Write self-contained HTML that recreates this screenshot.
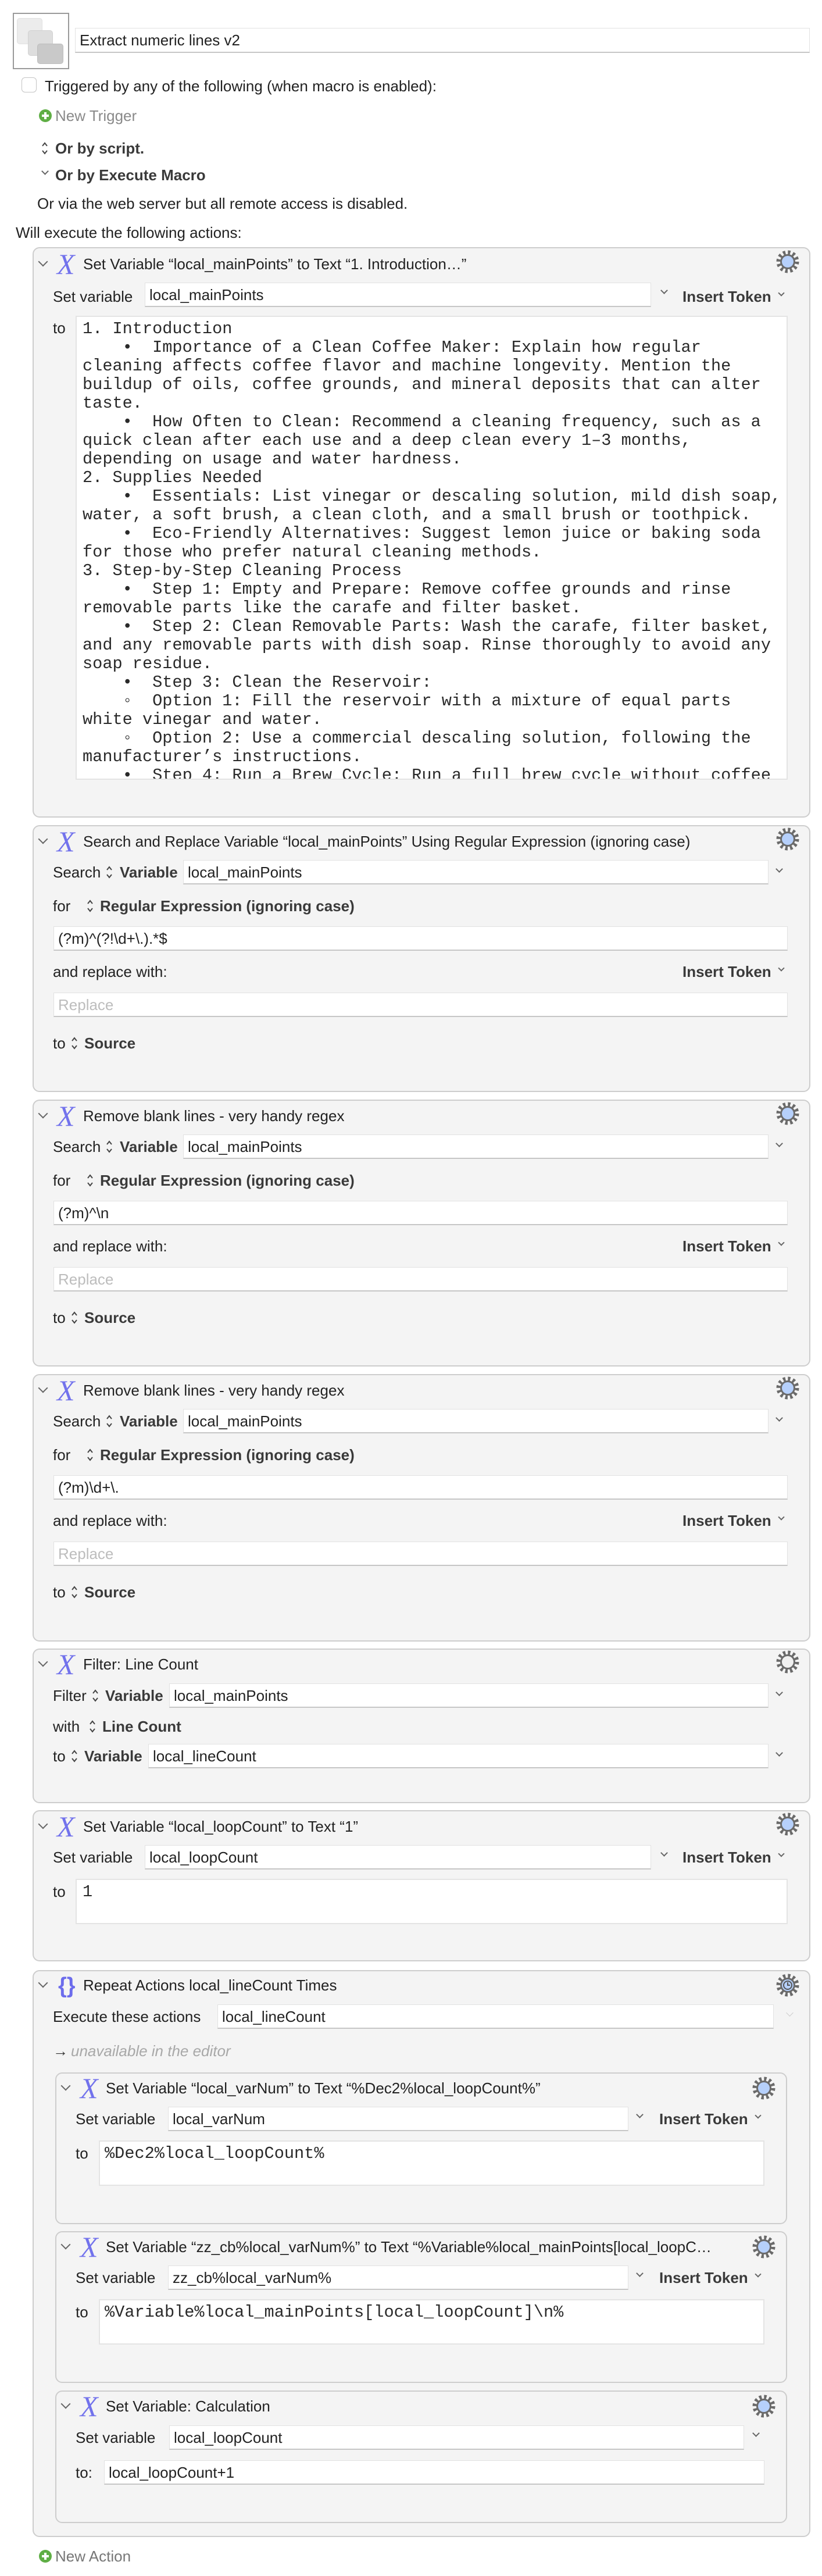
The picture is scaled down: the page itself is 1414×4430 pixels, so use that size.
<!DOCTYPE html>
<html><head><meta charset="utf-8"><style>
*{margin:0;padding:0;box-sizing:border-box}
body{width:1414px;height:4430px;background:#fff;position:relative;overflow:hidden;font-family:"Liberation Sans",Arial,sans-serif;font-size:26px;color:#222}
.t{position:absolute;line-height:30px;height:30px;white-space:nowrap}
.b{font-weight:bold;color:#3a3a3a}
.box{position:absolute;background:#f4f4f4;border:2px solid #cdcdcd;border-radius:12px}
.f{position:absolute;background:#fff;border:1px solid #e2e2e2;border-bottom:2px solid #c6c6c6;padding-left:7px;white-space:nowrap;overflow:hidden;color:#222}
.ph{color:#bdbdbd}
.mono{font-family:"Liberation Mono",monospace;font-size:28.6px;line-height:32px;white-space:pre;color:#2a2a2a}
.ta{position:absolute;background:#fff;border:2px solid #e4e4e4;overflow:hidden}
.x{position:absolute;font-family:"Liberation Serif",serif;font-style:italic;font-size:50px;line-height:40px;color:#7272ec;width:40px;height:40px}
.chev{position:absolute;width:12px;height:12px;border-right:2.5px solid #666;border-bottom:2.5px solid #666;transform:rotate(45deg)}
.ud{position:absolute;width:12px;height:26px}
</style></head><body>

<!-- top -->
<div style="position:absolute;left:22px;top:22px;width:97px;height:97px;border:2px solid #9a9a9a;background:#fff"></div>
<div style="position:absolute;left:29px;top:31px;width:44px;height:45px;background:#ececec;border-radius:5px;border:1px solid #e0e0e0"></div>
<div style="position:absolute;left:48px;top:52px;width:43px;height:44px;background:#dedede;border-radius:5px;border:1px solid #d2d2d2"></div>
<div style="position:absolute;left:64px;top:75px;width:45px;height:35px;background:#c9c9c9;border-radius:5px;border:1px solid #bdbdbd"></div>
<div class="f" style="left:129px;top:48px;width:1264px;height:43px;line-height:40px;font-size:26px">Extract numeric lines v2</div>
<div style="position:absolute;left:37px;top:133px;width:26px;height:26px;border:1.5px solid #c4c4c4;border-radius:6px;background:#fff"></div>
<div class="t" style="left:77px;top:133px">Triggered by any of the following (when macro is enabled):</div>
<svg style="position:absolute;left:66px;top:187px" width="24" height="24"><circle cx="12" cy="12" r="11" fill="#5fae45"/><path d="M12 6v12M6 12h12" stroke="#fff" stroke-width="4"/></svg>
<div class="t" style="left:95px;top:184px;color:#8a8a8a">New Trigger</div>
<svg class="ud" style="left:71px;top:242px" viewBox="0 0 12 26"><path d="M2 9l4-5 4 5M2 17l4 5 4-5" fill="none" stroke="#444" stroke-width="2"/></svg>
<div class="t b" style="left:95px;top:240px">Or by script.</div>
<div class="chev" style="left:73px;top:290px;width:9px;height:9px;border-width:2px"></div>
<div class="t b" style="left:95px;top:286px">Or by Execute Macro</div>
<div class="t" style="left:64px;top:335px">Or via the web server but all remote access is disabled.</div>
<div class="t" style="left:27px;top:385px">Will execute the following actions:</div>

<!-- gear def -->
<svg width="0" height="0" style="position:absolute"><defs>
<g id="gear"><circle cx="20" cy="20" r="16" fill="none" stroke="#6a6a6a" stroke-width="7" stroke-dasharray="4.2 4.2"/><circle cx="20" cy="20" r="13" fill="#6a6a6a"/><circle cx="20" cy="20" r="10" fill="#b6d0fb"/></g>
</defs></svg>

<!-- Box 1 -->
<div class="box" style="left:56px;top:425px;width:1338px;height:981px"></div>
<div class="chev" style="left:68px;top:444px"></div>
<div class="x" style="left:98px;top:434px">X</div>
<div class="t" style="left:143px;top:439px">Set Variable “local_mainPoints” to Text “1. Introduction…”</div>
<svg style="position:absolute;left:1335px;top:430px" width="40" height="40"><use href="#gear"/></svg>
<div class="t" style="left:91px;top:495px">Set variable</div>
<div class="f" style="left:249px;top:486px;width:871px;height:42px;line-height:40px">local_mainPoints</div>
<div class="chev" style="left:1138px;top:495px;width:9px;height:9px;border-width:2px"></div>
<div class="t b" style="left:1174px;top:495px">Insert Token</div>
<div class="chev" style="left:1340px;top:500px;width:8px;height:8px;border-width:2px"></div>
<div class="t" style="left:91px;top:549px">to</div>
<div class="ta" style="left:130px;top:543px;width:1225px;height:798px"><div class="mono" style="position:absolute;left:10px;top:5px">1. Introduction
    •  Importance of a Clean Coffee Maker: Explain how regular
cleaning affects coffee flavor and machine longevity. Mention the
buildup of oils, coffee grounds, and mineral deposits that can alter
taste.
    •  How Often to Clean: Recommend a cleaning frequency, such as a
quick clean after each use and a deep clean every 1–3 months,
depending on usage and water hardness.
2. Supplies Needed
    •  Essentials: List vinegar or descaling solution, mild dish soap,
water, a soft brush, a clean cloth, and a small brush or toothpick.
    •  Eco-Friendly Alternatives: Suggest lemon juice or baking soda
for those who prefer natural cleaning methods.
3. Step-by-Step Cleaning Process
    •  Step 1: Empty and Prepare: Remove coffee grounds and rinse
removable parts like the carafe and filter basket.
    •  Step 2: Clean Removable Parts: Wash the carafe, filter basket,
and any removable parts with dish soap. Rinse thoroughly to avoid any
soap residue.
    •  Step 3: Clean the Reservoir:
    ◦  Option 1: Fill the reservoir with a mixture of equal parts
white vinegar and water.
    ◦  Option 2: Use a commercial descaling solution, following the
manufacturer’s instructions.
    •  Step 4: Run a Brew Cycle: Run a full brew cycle without coffee
to clean the internal parts.</div></div>

<!-- Box 2,3,4 search/replace -->
<div class="box" style="left:56px;top:1419px;width:1338px;height:459px"></div>
<div class="chev" style="left:68px;top:1437px"></div>
<div class="x" style="left:98px;top:1427px">X</div>
<div class="t" style="left:143px;top:1432px">Search and Replace Variable “local_mainPoints” Using Regular Expression (ignoring case)</div>
<svg style="position:absolute;left:1335px;top:1423px" width="40" height="40"><use href="#gear"/></svg>
<div class="t" style="left:91px;top:1485px">Search</div>
<svg class="ud" style="left:182px;top:1487px" viewBox="0 0 12 26"><path d="M2 9l4-5 4 5M2 17l4 5 4-5" fill="none" stroke="#444" stroke-width="2"/></svg>
<div class="t b" style="left:206px;top:1485px">Variable</div>
<div class="f" style="left:315px;top:1479px;width:1007px;height:42px;line-height:40px">local_mainPoints</div>
<div class="chev" style="left:1336px;top:1490px;width:9px;height:9px;border-width:2px"></div>
<div class="t" style="left:91px;top:1543px">for</div>
<svg class="ud" style="left:149px;top:1545px" viewBox="0 0 12 26"><path d="M2 9l4-5 4 5M2 17l4 5 4-5" fill="none" stroke="#444" stroke-width="2"/></svg>
<div class="t b" style="left:172px;top:1543px">Regular Expression (ignoring case)</div>
<div class="f" style="left:92px;top:1593px;width:1263px;height:42px;line-height:40px">(?m)^(?!\d+\.).*$</div>
<div class="t" style="left:91px;top:1656px">and replace with:</div>
<div class="t b" style="left:1174px;top:1656px">Insert Token</div>
<div class="chev" style="left:1340px;top:1661px;width:8px;height:8px;border-width:2px"></div>
<div class="f ph" style="left:92px;top:1707px;width:1263px;height:42px;line-height:40px">Replace</div>
<div class="t" style="left:91px;top:1779px">to</div>
<svg class="ud" style="left:122px;top:1781px" viewBox="0 0 12 26"><path d="M2 9l4-5 4 5M2 17l4 5 4-5" fill="none" stroke="#444" stroke-width="2"/></svg>
<div class="t b" style="left:145px;top:1779px">Source</div>

<div class="box" style="left:56px;top:1891px;width:1338px;height:459px"></div>
<div class="chev" style="left:68px;top:1909px"></div>
<div class="x" style="left:98px;top:1899px">X</div>
<div class="t" style="left:143px;top:1904px">Remove blank lines - very handy regex</div>
<svg style="position:absolute;left:1335px;top:1895px" width="40" height="40"><use href="#gear"/></svg>
<div class="t" style="left:91px;top:1957px">Search</div>
<svg class="ud" style="left:182px;top:1959px" viewBox="0 0 12 26"><path d="M2 9l4-5 4 5M2 17l4 5 4-5" fill="none" stroke="#444" stroke-width="2"/></svg>
<div class="t b" style="left:206px;top:1957px">Variable</div>
<div class="f" style="left:315px;top:1951px;width:1007px;height:42px;line-height:40px">local_mainPoints</div>
<div class="chev" style="left:1336px;top:1962px;width:9px;height:9px;border-width:2px"></div>
<div class="t" style="left:91px;top:2015px">for</div>
<svg class="ud" style="left:149px;top:2017px" viewBox="0 0 12 26"><path d="M2 9l4-5 4 5M2 17l4 5 4-5" fill="none" stroke="#444" stroke-width="2"/></svg>
<div class="t b" style="left:172px;top:2015px">Regular Expression (ignoring case)</div>
<div class="f" style="left:92px;top:2065px;width:1263px;height:42px;line-height:40px">(?m)^\n</div>
<div class="t" style="left:91px;top:2128px">and replace with:</div>
<div class="t b" style="left:1174px;top:2128px">Insert Token</div>
<div class="chev" style="left:1340px;top:2133px;width:8px;height:8px;border-width:2px"></div>
<div class="f ph" style="left:92px;top:2179px;width:1263px;height:42px;line-height:40px">Replace</div>
<div class="t" style="left:91px;top:2251px">to</div>
<svg class="ud" style="left:122px;top:2253px" viewBox="0 0 12 26"><path d="M2 9l4-5 4 5M2 17l4 5 4-5" fill="none" stroke="#444" stroke-width="2"/></svg>
<div class="t b" style="left:145px;top:2251px">Source</div>

<div class="box" style="left:56px;top:2363px;width:1338px;height:460px"></div>
<div class="chev" style="left:68px;top:2381px"></div>
<div class="x" style="left:98px;top:2371px">X</div>
<div class="t" style="left:143px;top:2376px">Remove blank lines - very handy regex</div>
<svg style="position:absolute;left:1335px;top:2367px" width="40" height="40"><use href="#gear"/></svg>
<div class="t" style="left:91px;top:2429px">Search</div>
<svg class="ud" style="left:182px;top:2431px" viewBox="0 0 12 26"><path d="M2 9l4-5 4 5M2 17l4 5 4-5" fill="none" stroke="#444" stroke-width="2"/></svg>
<div class="t b" style="left:206px;top:2429px">Variable</div>
<div class="f" style="left:315px;top:2423px;width:1007px;height:42px;line-height:40px">local_mainPoints</div>
<div class="chev" style="left:1336px;top:2434px;width:9px;height:9px;border-width:2px"></div>
<div class="t" style="left:91px;top:2487px">for</div>
<svg class="ud" style="left:149px;top:2489px" viewBox="0 0 12 26"><path d="M2 9l4-5 4 5M2 17l4 5 4-5" fill="none" stroke="#444" stroke-width="2"/></svg>
<div class="t b" style="left:172px;top:2487px">Regular Expression (ignoring case)</div>
<div class="f" style="left:92px;top:2537px;width:1263px;height:42px;line-height:40px">(?m)\d+\.</div>
<div class="t" style="left:91px;top:2600px">and replace with:</div>
<div class="t b" style="left:1174px;top:2600px">Insert Token</div>
<div class="chev" style="left:1340px;top:2605px;width:8px;height:8px;border-width:2px"></div>
<div class="f ph" style="left:92px;top:2651px;width:1263px;height:42px;line-height:40px">Replace</div>
<div class="t" style="left:91px;top:2723px">to</div>
<svg class="ud" style="left:122px;top:2725px" viewBox="0 0 12 26"><path d="M2 9l4-5 4 5M2 17l4 5 4-5" fill="none" stroke="#444" stroke-width="2"/></svg>
<div class="t b" style="left:145px;top:2723px">Source</div>

<!-- Box 5 filter -->
<div class="box" style="left:56px;top:2835px;width:1338px;height:266px"></div>
<div class="chev" style="left:68px;top:2852px"></div>
<div class="x" style="left:98px;top:2842px">X</div>
<div class="t" style="left:143px;top:2847px">Filter: Line Count</div>
<svg style="position:absolute;left:1335px;top:2838px" width="40" height="40"><circle cx="20" cy="20" r="16" fill="none" stroke="#6a6a6a" stroke-width="7" stroke-dasharray="4.2 4.2"/><circle cx="20" cy="20" r="13" fill="#6a6a6a"/><circle cx="20" cy="20" r="10" fill="#f0f0f0"/></svg>
<div class="t" style="left:91px;top:2901px">Filter</div>
<svg class="ud" style="left:158px;top:2903px" viewBox="0 0 12 26"><path d="M2 9l4-5 4 5M2 17l4 5 4-5" fill="none" stroke="#444" stroke-width="2"/></svg>
<div class="t b" style="left:181px;top:2901px">Variable</div>
<div class="f" style="left:291px;top:2895px;width:1031px;height:42px;line-height:40px">local_mainPoints</div>
<div class="chev" style="left:1336px;top:2906px;width:9px;height:9px;border-width:2px"></div>
<div class="t" style="left:91px;top:2954px">with</div>
<svg class="ud" style="left:153px;top:2956px" viewBox="0 0 12 26"><path d="M2 9l4-5 4 5M2 17l4 5 4-5" fill="none" stroke="#444" stroke-width="2"/></svg>
<div class="t b" style="left:176px;top:2954px">Line Count</div>
<div class="t" style="left:91px;top:3005px">to</div>
<svg class="ud" style="left:122px;top:3007px" viewBox="0 0 12 26"><path d="M2 9l4-5 4 5M2 17l4 5 4-5" fill="none" stroke="#444" stroke-width="2"/></svg>
<div class="t b" style="left:145px;top:3005px">Variable</div>
<div class="f" style="left:255px;top:2999px;width:1067px;height:42px;line-height:40px">local_lineCount</div>
<div class="chev" style="left:1336px;top:3010px;width:9px;height:9px;border-width:2px"></div>

<!-- Box 6 -->
<div class="box" style="left:56px;top:3113px;width:1338px;height:260px"></div>
<div class="chev" style="left:68px;top:3131px"></div>
<div class="x" style="left:98px;top:3121px">X</div>
<div class="t" style="left:143px;top:3126px">Set Variable “local_loopCount” to Text “1”</div>
<svg style="position:absolute;left:1335px;top:3117px" width="40" height="40"><use href="#gear"/></svg>
<div class="t" style="left:91px;top:3179px">Set variable</div>
<div class="f" style="left:249px;top:3173px;width:871px;height:42px;line-height:40px">local_loopCount</div>
<div class="chev" style="left:1138px;top:3182px;width:9px;height:9px;border-width:2px"></div>
<div class="t b" style="left:1174px;top:3179px">Insert Token</div>
<div class="chev" style="left:1340px;top:3184px;width:8px;height:8px;border-width:2px"></div>
<div class="t" style="left:91px;top:3238px">to</div>
<div class="ta" style="left:130px;top:3231px;width:1225px;height:78px"><div class="mono" style="position:absolute;left:10px;top:5px">1</div></div>

<!-- Box 7 repeat -->
<div class="box" style="left:56px;top:3388px;width:1338px;height:975px"></div>
<div class="chev" style="left:68px;top:3404px"></div>
<div style="position:absolute;left:100px;top:3396px;font-size:38px;line-height:38px;color:#6c6cec;font-weight:bold">{}</div>
<div class="t" style="left:143px;top:3399px">Repeat Actions local_lineCount Times</div>
<svg style="position:absolute;left:1335px;top:3394px" width="40" height="40"><use href="#gear"/><circle cx="20" cy="20" r="7" fill="none" stroke="#555" stroke-width="2"/><path d="M20 15v5h4" stroke="#555" stroke-width="2" fill="none"/></svg>
<div class="t" style="left:91px;top:3453px">Execute these actions</div>
<div class="f" style="left:374px;top:3447px;width:957px;height:42px;line-height:40px">local_lineCount</div>
<div class="chev" style="left:1354px;top:3457px;width:9px;height:9px;border-width:1.5px;border-color:#ccc"></div>
<div class="t" style="left:91px;top:3512px;color:#333">→</div>
<div class="t" style="left:122px;top:3512px;color:#a8a8a8;font-style:italic">unavailable in the editor</div>

<!-- inner 1 -->
<div class="box" style="left:95px;top:3564px;width:1259px;height:261px"></div>
<div class="chev" style="left:107px;top:3581px"></div>
<div class="x" style="left:138px;top:3571px">X</div>
<div class="t" style="left:182px;top:3576px">Set Variable “local_varNum” to Text “%Dec2%local_loopCount%”</div>
<svg style="position:absolute;left:1294px;top:3571px" width="40" height="40"><use href="#gear"/></svg>
<div class="t" style="left:130px;top:3629px">Set variable</div>
<div class="f" style="left:289px;top:3623px;width:792px;height:42px;line-height:40px">local_varNum</div>
<div class="chev" style="left:1096px;top:3632px;width:9px;height:9px;border-width:2px"></div>
<div class="t b" style="left:1134px;top:3629px">Insert Token</div>
<div class="chev" style="left:1300px;top:3634px;width:8px;height:8px;border-width:2px"></div>
<div class="t" style="left:130px;top:3688px">to</div>
<div class="ta" style="left:170px;top:3681px;width:1145px;height:78px"><div class="mono" style="position:absolute;left:8px;top:5px">%Dec2%local_loopCount%</div></div>

<!-- inner 2 -->
<div class="box" style="left:95px;top:3837px;width:1259px;height:261px"></div>
<div class="chev" style="left:107px;top:3854px"></div>
<div class="x" style="left:138px;top:3844px">X</div>
<div class="t" style="left:182px;top:3849px">Set Variable “zz_cb%local_varNum%” to Text “%Variable%local_mainPoints[local_loopC…</div>
<svg style="position:absolute;left:1294px;top:3844px" width="40" height="40"><use href="#gear"/></svg>
<div class="t" style="left:130px;top:3902px">Set variable</div>
<div class="f" style="left:289px;top:3896px;width:792px;height:42px;line-height:40px">zz_cb%local_varNum%</div>
<div class="chev" style="left:1096px;top:3905px;width:9px;height:9px;border-width:2px"></div>
<div class="t b" style="left:1134px;top:3902px">Insert Token</div>
<div class="chev" style="left:1300px;top:3907px;width:8px;height:8px;border-width:2px"></div>
<div class="t" style="left:130px;top:3961px">to</div>
<div class="ta" style="left:170px;top:3954px;width:1145px;height:78px"><div class="mono" style="position:absolute;left:8px;top:5px">%Variable%local_mainPoints[local_loopCount]\n%</div></div>

<!-- inner 3 -->
<div class="box" style="left:95px;top:4111px;width:1259px;height:228px"></div>
<div class="chev" style="left:107px;top:4128px"></div>
<div class="x" style="left:138px;top:4118px">X</div>
<div class="t" style="left:182px;top:4123px">Set Variable: Calculation</div>
<svg style="position:absolute;left:1294px;top:4118px" width="40" height="40"><use href="#gear"/></svg>
<div class="t" style="left:130px;top:4177px">Set variable</div>
<div class="f" style="left:291px;top:4171px;width:989px;height:42px;line-height:40px">local_loopCount</div>
<div class="chev" style="left:1296px;top:4180px;width:9px;height:9px;border-width:2px"></div>
<div class="t" style="left:130px;top:4237px">to:</div>
<div class="f" style="left:179px;top:4231px;width:1136px;height:42px;line-height:40px">local_loopCount+1</div>

<svg style="position:absolute;left:66px;top:4384px" width="24" height="24"><circle cx="12" cy="12" r="11" fill="#5fae45"/><path d="M12 6v12M6 12h12" stroke="#fff" stroke-width="4"/></svg>
<div class="t" style="left:95px;top:4381px;color:#777">New Action</div>
</body></html>
